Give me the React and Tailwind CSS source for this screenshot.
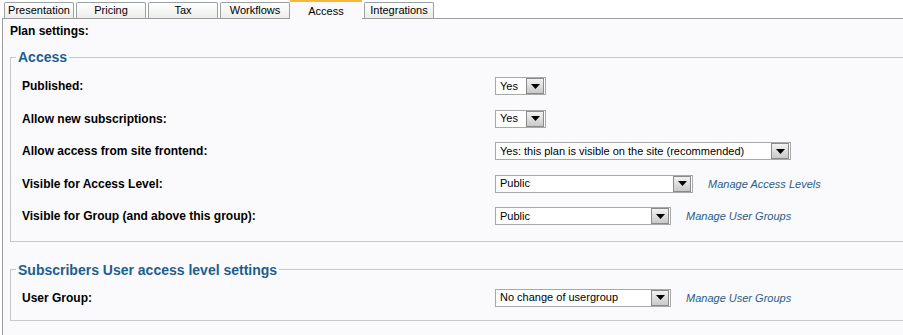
import React from "react";

const font = { fontFamily: '"Liberation Sans", Arial, sans-serif' };

function Arrow() {
  return (
    <span className="flex h-[16px] w-[18px] shrink-0 items-center justify-center border border-[#8a8a8a] bg-gradient-to-b from-[#f2f2f2] to-[#c9c9c9]">
      <svg width="9" height="5" viewBox="0 0 9 5">
        <polygon points="0,0 9,0 4.5,5" fill="#000" />
      </svg>
    </span>
  );
}

function Select({ value, width }) {
  return (
    <div
      className="flex h-[18px] items-center justify-between border border-[#a8a8a8] bg-white pl-[4px] pr-[1px]"
      style={{ width }}
    >
      <span className="text-[11px] leading-none text-black">{value}</span>
      <Arrow />
    </div>
  );
}

function Row({ label, value, width, link }) {
  return (
    <div className="flex h-[32.5px] items-center">
      <div className="w-[473px] text-[12px] font-bold text-black">{label}</div>
      <Select value={value} width={width} />
      {link && (
        <span className="ml-[15px] text-[11px] italic text-[#2a5d85]">{link}</span>
      )}
    </div>
  );
}

function Tab({ label, active }) {
  if (active) {
    return (
      <div className="relative z-10 mb-[-1px] flex h-[19px] w-[72px] items-start justify-center border-t-[2px] border-[#f8b737] bg-[#fafafc] pt-[1px] text-[11px] text-black">
        {label}
      </div>
    );
  }
  return (
    <div className="mt-[2px] flex h-[16px] w-[70px] items-center justify-center rounded-t-[2px] border border-b-0 border-[#9aa0a3] bg-gradient-to-b from-[#ffffff] to-[#ececea] text-[11px] text-black">
      {label}
    </div>
  );
}

export default function App() {
  return (
    <div className="h-[335px] w-[903px] overflow-hidden bg-white" style={font}>
      <div className="flex items-end gap-[2px] pl-[4px]">
        <Tab label="Presentation" />
        <Tab label="Pricing" />
        <Tab label="Tax" />
        <Tab label="Workflows" />
        <div className="-ml-[2px] flex">
          <Tab label="Access" active />
        </div>
        <Tab label="Integrations" />
      </div>
      <div className="ml-[2px] h-[320px] w-[960px] border-l border-t border-[#9c9c9c] bg-[#fafafc] pl-[7px] pt-[3px]">
        <div className="text-[12px] font-bold text-black">Plan settings:</div>
        <fieldset className="mt-[9px] w-[940px] border border-[#c8c8c8] pb-[8px] pl-[11px] pt-[5px]">
          <legend className="ml-[-6px] px-[2px] text-[14px] font-bold leading-[16px] text-[#1d5e8e]">
            Access
          </legend>
          <Row label="Published:" value="Yes" width="51px" />
          <Row label="Allow new subscriptions:" value="Yes" width="51px" />
          <Row
            label="Allow access from site frontend:"
            value="Yes: this plan is visible on the site (recommended)"
            width="296px"
          />
          <Row label="Visible for Access Level:" value="Public" width="198px" link="Manage Access Levels" />
          <Row
            label="Visible for Group (and above this group):"
            value="Public"
            width="176px"
            link="Manage User Groups"
          />
        </fieldset>
        <fieldset className="mt-[20px] w-[940px] border border-[#c8c8c8] pb-[6px] pl-[11px] pt-[4px]">
          <legend className="ml-[-6px] px-[2px] text-[14px] font-bold leading-[16px] text-[#1d5e8e]">
            Subscribers User access level settings
          </legend>
          <Row label="User Group:" value="No change of usergroup" width="176px" link="Manage User Groups" />
        </fieldset>
      </div>
    </div>
  );
}
